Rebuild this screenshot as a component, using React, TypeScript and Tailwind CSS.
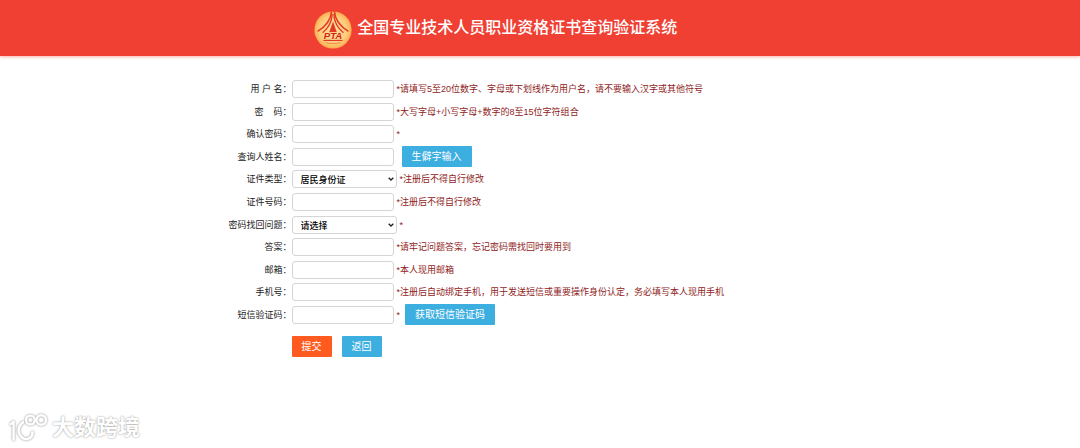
import { useState, type FormEvent, type ReactNode } from 'react'

interface FormRowProps {
  id: string
  label: string
  hint?: string
  children?: ReactNode
  action?: string
}

interface SelectInputProps {
  id: string
  value: string
  onChange: (value: string) => void
  children: ReactNode
}

const controlClass = 'h-[18px] rounded-[3px] border border-[#d5d5d5] bg-white text-[9px] text-black outline-none focus:border-[#3daee0]'
const buttonClass = 'h-[21px] rounded-[1px] px-[10px] text-[10px] leading-[21px] text-white'

function Emblem() {
  return (
    <svg viewBox="0 0 40 40" className="size-10 shrink-0" aria-hidden="true">
      <defs>
        <radialGradient id="emblem-gold" cx="50%" cy="50%" r="50%">
          <stop offset="0%" stopColor="#ffe2a0" />
          <stop offset="75%" stopColor="#fecb7c" />
          <stop offset="100%" stopColor="#fbae4e" />
        </radialGradient>
      </defs>
      <circle cx="20" cy="20" r="18.6" fill="url(#emblem-gold)" />
      {/* curved beams */}
      <g fill="none" stroke="#e23a24">
        <path d="M18.6 1.4C18 9 13.4 16 4.6 21.4" strokeWidth="1.5" />
        <path d="M21.4 1.4C22 9 26.6 16 35.4 21.4" strokeWidth="1.5" />
        <path d="M19.2 4C18.8 12.4 15 18.4 9.6 22.8" strokeWidth="1.3" />
        <path d="M20.8 4C21.2 12.4 25 18.4 30.4 22.8" strokeWidth="1.3" />
      </g>
      <path d="M20 11.6l3.8 10.6h-7.6z" fill="#e23a24" />
      <path d="M10.4 30.4h19.2" stroke="#e23a24" strokeWidth="1.2" />
      <path d="M12.6 32.6c4 1.4 10.8 1.4 14.8 0" fill="none" stroke="#f08a48" strokeWidth="1" />
      <text
        x="20"
        y="28.8"
        textAnchor="middle"
        fontFamily="Liberation Sans, sans-serif"
        fontSize="9.6"
        fontWeight="700"
        fontStyle="italic"
        fill="#d3221a"
        stroke="#ffdc94"
        strokeWidth="1"
        paintOrder="stroke"
      >
        PTA
      </text>
    </svg>
  )
}

function Watermark() {
  return (
    <div className="flex items-center gap-1 pl-2 text-white">
      <svg viewBox="0 0 40 30" className="h-[30px] w-10 drop-shadow-[0_0_1px_#888888]" fill="none" stroke="currentColor" aria-hidden="true">
        <path d="M1.6 11.4C3.8 11 5 9.6 5.6 7.8V27.4" strokeWidth="2.4" />
        <path d="M16 8.6C11.4 11.4 9.8 16 11.2 20.4C12.6 24.8 16.4 26.8 20 25.8C23 24.8 24.6 22 24.6 18.4" strokeWidth="2.6" />
        <circle cx="22.4" cy="7" r="4.4" strokeWidth="2.4" />
        <circle cx="33.2" cy="7" r="4.8" strokeWidth="2.4" />
        <path d="M26 9.6L29.4 4.4" strokeWidth="2" />
      </svg>
      <span className="text-[22px] leading-[30px] font-bold [text-shadow:0_0_2px_#888888]">大数跨境</span>
    </div>
  )
}

function FormRow({ id, label, hint, children, action }: FormRowProps) {
  return (
    <div className="flex items-center">
      <label htmlFor={id} className="w-[27%] shrink-0 text-right whitespace-pre text-[#222222]">
        {label}：
      </label>
      {children}
      {hint && <span className="ml-[3px] text-[#8f2323]">{hint}</span>}
      {action && (
        <button type="button" className={`${buttonClass} ${hint ? 'ml-[5px]' : 'ml-2'} bg-[#3daee0]`}>
          {action}
        </button>
      )}
    </div>
  )
}

function TextInput({ id, type = 'text' }: { id: string; type?: string }) {
  return <input id={id} name={id} type={type} className={`${controlClass} w-[102px] px-2`} />
}

function SelectInput({ id, value, onChange, children }: SelectInputProps) {
  return (
    <div className="grid w-[105px] items-center">
      <select
        id={id}
        value={value}
        onChange={(e) => onChange(e.target.value)}
        className={`${controlClass} col-start-1 row-start-1 w-full appearance-none pr-4 pl-2 font-medium`}
      >
        {children}
      </select>
      <svg
        viewBox="0 0 6 4"
        className="pointer-events-none col-start-1 row-start-1 mr-[3px] h-1 w-1.5 justify-self-end"
        fill="none"
        stroke="#222222"
        strokeWidth="1.3"
        aria-hidden="true"
      >
        <path d="M0.7 0.7L3 3L5.3 0.7" />
      </svg>
    </div>
  )
}

export default function App() {
  const [idType, setIdType] = useState('居民身份证')
  const [question, setQuestion] = useState('')

  const handleSubmit = (e: FormEvent) => {
    e.preventDefault()
  }

  return (
    <div className="bg-white font-['Liberation_Sans','Noto_Sans_CJK_SC',sans-serif]" lang="zh-CN">
      {/* Header */}
      <header className="flex h-14 items-center gap-1 bg-[#f03f33] pt-1 pl-[29%] shadow-[0_1px_3px_#f03f3366]">
        <Emblem />
        <h1 className="pb-1 text-[16px] leading-6 font-medium whitespace-nowrap text-white">
          全国专业技术人员职业资格证书查询验证系统
        </h1>
      </header>

      {/* Registration form */}
      <form onSubmit={handleSubmit} className="pt-[22px] text-[9px] leading-[18px]">
        <div className="grid h-[248px] auto-rows-fr">
          <FormRow id="username" label="用 户 名" hint="*请填写5至20位数字、字母或下划线作为用户名，请不要输入汉字或其他符号">
            <TextInput id="username" />
          </FormRow>
          <FormRow id="password" label="密    码" hint="*大写字母+小写字母+数字的8至15位字符组合">
            <TextInput id="password" type="password" />
          </FormRow>
          <FormRow id="confirm" label="确认密码" hint="*">
            <TextInput id="confirm" type="password" />
          </FormRow>
          <FormRow id="realname" label="查询人姓名" action="生僻字输入">
            <TextInput id="realname" />
          </FormRow>
          <FormRow id="id-type" label="证件类型" hint="*注册后不得自行修改">
            <SelectInput id="id-type" value={idType} onChange={setIdType}>
              <option>居民身份证</option>
              <option>护照</option>
            </SelectInput>
          </FormRow>
          <FormRow id="id-number" label="证件号码" hint="*注册后不得自行修改">
            <TextInput id="id-number" />
          </FormRow>
          <FormRow id="question" label="密码找回问题" hint="*">
            <SelectInput id="question" value={question} onChange={setQuestion}>
              <option value="">请选择</option>
            </SelectInput>
          </FormRow>
          <FormRow id="answer" label="答案" hint="*请牢记问题答案，忘记密码需找回时要用到">
            <TextInput id="answer" />
          </FormRow>
          <FormRow id="email" label="邮箱" hint="*本人现用邮箱">
            <TextInput id="email" type="email" />
          </FormRow>
          <FormRow id="mobile" label="手机号" hint="*注册后自动绑定手机，用于发送短信或重要操作身份认定，务必填写本人现用手机">
            <TextInput id="mobile" type="tel" />
          </FormRow>
          <FormRow id="sms-code" label="短信验证码" hint="*" action="获取短信验证码">
            <TextInput id="sms-code" />
          </FormRow>
        </div>

        <div className="flex gap-[10px] pt-[10px] pl-[27%]">
          <button type="submit" className={`${buttonClass} bg-[#ff5a1f]`}>提交</button>
          <button type="button" className={`${buttonClass} bg-[#3daee0]`}>返回</button>
        </div>
      </form>

      <footer className="pt-14">
        <Watermark />
      </footer>
    </div>
  )
}
